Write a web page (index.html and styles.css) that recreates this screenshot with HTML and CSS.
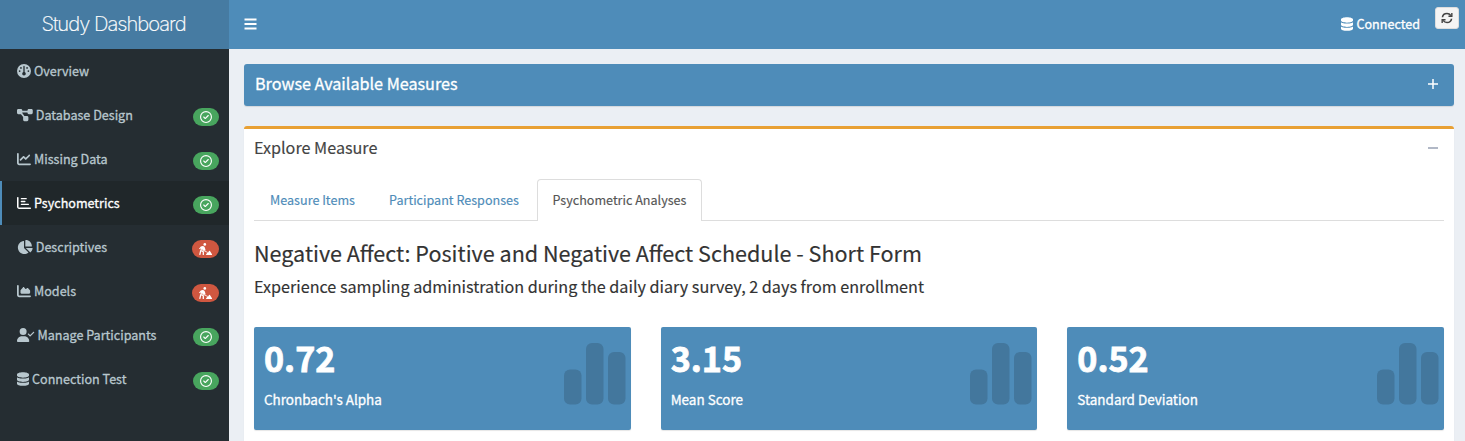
FILE: index.html
```html
<!DOCTYPE html>
<html lang="en">
<head>
<meta charset="utf-8">
<title>Study Dashboard</title>
<link rel="stylesheet" href="styles.css">
</head>
<body>
<svg class="defs" aria-hidden="true">
  <symbol id="check" viewBox="0 0 512 512"><path d="M256 48a208 208 0 1 1 0 416 208 208 0 1 1 0-416zm0 464A256 256 0 1 0 256 0a256 256 0 1 0 0 512zM369 209c9.4-9.4 9.4-24.6 0-33.9s-24.6-9.4-33.9 0l-111 111-47-47c-9.4-9.4-24.6-9.4-33.9 0s-9.4 24.6 0 33.9l64 64c9.4 9.4 24.6 9.4 33.9 0L369 209z"/></symbol>
  <symbol id="digging" viewBox="0 0 13.500 12"><circle cx="5.800" cy="1.400" r="1.350"/><path d="M.6 4.900 1.800 3.500Q3.300 2.700 4.700 3.200 5.400 3.600 5.800 4.600L6.600 7.300 5.900 7.700 2.200 6z"/><path d="M6.800 12 8.200 9.800H9L10 8.100Q10.600 7.500 11.100 8.300L13.400 12z"/><path class="shovel" d="M.4 5.500 8.400 9.300"/><path class="leg" d="M1.700 7.600.9 11.400M2.300 7.700 4.300 8.800V11.400"/></symbol>
  <symbol id="database" viewBox="0 0 448 512"><path d="M448 80v48c0 44.200-100.300 80-224 80S0 172.200 0 128V80C0 35.800 100.300 0 224 0S448 35.800 448 80zM393.200 214.700c20.800-7.400 39.900-16.900 54.800-28.600V288c0 44.200-100.300 80-224 80S0 332.200 0 288V186.100c14.900 11.800 34 21.200 54.800 28.600C99.700 230.700 159.500 240 224 240s124.300-9.300 169.200-25.300zM0 346.100c14.900 11.800 34 21.200 54.800 28.600C99.700 390.700 159.500 400 224 400s124.300-9.300 169.200-25.300c20.800-7.400 39.900-16.900 54.800-28.600V432c0 44.200-100.300 80-224 80S0 476.200 0 432V346.100z"/></symbol>
  <symbol id="bars" viewBox="0 0 62 62"><rect y="26.500" width="17.500" height="35" rx="6"/><rect x="22" width="17.500" height="61.500" rx="6"/><rect x="44" y="9" width="17.500" height="52.500" rx="6"/></symbol>
</svg>
<header class="header">
  <div class="logo">Study Dashboard</div>
  <nav class="navbar">
    <svg class="menu" viewBox="0 0 12 12"><path d="M0 1.500h12M0 6h12M0 10.500h12"/></svg>
    <div class="status"><svg class="db"><use href="#database"/></svg><span>Connected</span></div>
    <button class="refresh"><svg viewBox="0 0 512 512"><path class="arc" d="M62 224C75 125 155 62 256 62c70 0 128 38 168 92M450 288C437 387 357 450 256 450c-70 0-128-38-168-92"/><path class="arc thin" d="M462 40v144H318M50 472V328h144"/></svg></button>
  </nav>
</header>
<div class="shell">
  <aside class="sidebar">
    <a class="item"><svg class="w14" viewBox="0 0 512 512"><path fill-rule="evenodd" d="M0 256a256 256 0 1 1 512 0A256 256 0 1 1 0 256zm320 96c0-26.900-16.500-49.900-40-59.300V88c0-13.300-10.700-24-24-24s-24 10.700-24 24V292.700c-23.500 9.500-40 32.500-40 59.300c0 35.300 28.700 64 64 64s64-28.700 64-64zM144 176a32 32 0 1 0 0-64 32 32 0 1 0 0 64zm-16 80a32 32 0 1 0 -64 0 32 32 0 1 0 64 0zm288 32a32 32 0 1 0 0-64 32 32 0 1 0 0 64zM400 144a32 32 0 1 0 -64 0 32 32 0 1 0 64 0z"/></svg><span>Overview</span></a>
    <a class="item"><svg class="w16" viewBox="0 0 576 512"><path d="M0 80C0 53.500 21.500 32 48 32h96c26.500 0 48 21.500 48 48V96H384V80c0-26.500 21.500-48 48-48h96c26.500 0 48 21.500 48 48v96c0 26.500-21.500 48-48 48H432c-26.500 0-48-21.500-48-48V160H192v16c0 1.700-.1 3.400-.3 5L272 288h96c26.500 0 48 21.500 48 48v96c0 26.500-21.500 48-48 48H272c-26.500 0-48-21.500-48-48V336c0-1.700 .1-3.400 .3-5L144 224H48c-26.500 0-48-21.500-48-48V80z"/></svg><span>Database Design</span><i class="badge ok"><svg><use href="#check"/></svg></i></a>
    <a class="item"><svg class="w14" viewBox="0 0 512 512"><path d="M64 64c0-17.700-14.300-32-32-32S0 46.300 0 64V400c0 44.200 35.800 80 80 80H480c17.700 0 32-14.300 32-32s-14.300-32-32-32H80c-8.800 0-16-7.200-16-16V64zm406.600 86.600c12.500-12.500 12.500-32.800 0-45.300s-32.800-12.500-45.300 0L320 210.700l-57.400-57.400c-12.500-12.500-32.800-12.500-45.300 0l-112 112c-12.500 12.500-12.500 32.800 0 45.300s32.800 12.500 45.300 0L240 221.300l57.400 57.400c12.500 12.500 32.800 12.500 45.300 0l128-128z"/></svg><span>Missing Data</span><i class="badge ok"><svg><use href="#check"/></svg></i></a>
    <a class="item active"><svg class="w14" viewBox="0 0 512 512"><path d="M32 32c14 0 24 10 24 24V408c0 8.800 7.200 16 16 16H488c14 0 24 10 24 24s-10 24-24 24H80c-44.200 0-80-35.800-80-80V56C0 42 14 32 32 32z"/><path d="M160 72H336a24 24 0 0 1 0 48H160a24 24 0 0 1 0-48zm0 104H288a24 24 0 0 1 0 48H160a24 24 0 0 1 0-48zm0 104H416a24 24 0 0 1 0 48H160a24 24 0 0 1 0-48z"/></svg><span>Psychometrics</span><i class="badge ok"><svg><use href="#check"/></svg></i></a>
    <a class="item"><svg class="w16" viewBox="0 0 576 512"><path d="M304 240V16.600c0-9 7-16.600 16-16.600C443.700 0 544 100.300 544 224c0 9-7.600 16-16.600 16H304zM32 272C32 150.700 122.100 50.300 239 34.300c9.200-1.300 17 6.100 17 15.400V288L412.500 444.500c6.700 6.700 6.200 17.700-1.500 23.100C371.800 495.600 323.800 512 272 512C139.500 512 32 404.600 32 272zm526.400 16c9.300 0 16.600 7.800 15.400 17c-7.700 55.900-34.600 105.600-73.900 142.300c-6 5.600-15.400 5.200-21.200-.7L320 288H558.400z"/></svg><span>Descriptives</span><i class="badge wip"><svg><use href="#digging"/></svg></i></a>
    <a class="item"><svg class="w14" viewBox="0 0 512 512"><path d="M64 64c0-17.700-14.300-32-32-32S0 46.300 0 64V400c0 44.200 35.800 80 80 80H480c17.700 0 32-14.300 32-32s-14.300-32-32-32H80c-8.800 0-16-7.200-16-16V64zm96 288H448c17.700 0 32-14.300 32-32V251.800c0-7.600-2.700-15-7.700-20.800l-65.800-76.800c-12.100-14.200-33.700-15-46.900-1.800l-21 21c-10 10-26.400 9.200-35.400-1.600l-39.200-47c-12.600-15.100-35.700-15.400-48.700-.6L135.900 215c-5.100 5.800-7.900 13.300-7.900 21.100v84c0 17.700 14.300 32 32 32z"/></svg><span>Models</span><i class="badge wip"><svg><use href="#digging"/></svg></i></a>
    <a class="item"><svg class="w18" viewBox="0 0 640 512"><path d="M96 128a128 128 0 1 1 256 0A128 128 0 1 1 96 128zM0 482.300C0 383.800 79.800 304 178.300 304h91.400C368.200 304 448 383.800 448 482.300c0 16.400-13.300 29.700-29.700 29.700H29.700C13.300 512 0 498.700 0 482.300zM625 177L497 305c-9.400 9.400-24.600 9.400-33.900 0l-64-64c-9.400-9.400-9.400-24.600 0-33.900s24.600-9.400 33.900 0l47 47L591 143c9.400-9.400 24.600-9.400 33.900 0s9.400 24.600 0 33.900z"/></svg><span>Manage Participants</span><i class="badge ok"><svg><use href="#check"/></svg></i></a>
    <a class="item"><svg class="w12"><use href="#database"/></svg><span>Connection Test</span><i class="badge ok"><svg><use href="#check"/></svg></i></a>
  </aside>
  <main class="content">
    <section class="browse"><h3>Browse Available Measures</h3><svg class="toggle" viewBox="0 0 10 10"><path d="M0 5h10M5 0v10"/></svg></section>
    <section class="explore">
      <div class="explore-head"><h3>Explore Measure</h3><svg class="toggle" viewBox="0 0 10 10"><path d="M0 5h10"/></svg></div>
      <div class="tabs"><a class="tab t1">Measure Items</a><a class="tab t2">Participant Responses</a><a class="tab t3 current">Psychometric Analyses</a></div>
      <h2>Negative Affect: Positive and Negative Affect Schedule - Short Form</h2>
      <h4>Experience sampling administration during the daily diary survey, 2 days from enrollment</h4>
      <div class="cards">
        <div class="card"><div><b>0.72</b><p>Chronbach's Alpha</p></div><svg><use href="#bars"/></svg></div>
        <div class="card"><div><b>3.15</b><p>Mean Score</p></div><svg><use href="#bars"/></svg></div>
        <div class="card"><div><b>0.52</b><p>Standard Deviation</p></div><svg><use href="#bars"/></svg></div>
      </div>
    </section>
  </main>
</div>
</body>
</html>
```
FILE: styles.css
```css
* { box-sizing: border-box; }
body { margin: 0; height: 441px; overflow: hidden; background: #ebeff4; font: 400 12.58px/20px "Noto Sans CJK SC", sans-serif; color: #333; }
h2, h3, h4, p { margin: 0; font-weight: 400; }
svg { display: block; flex: none; fill: currentColor; }
.defs { position: absolute; width: 0; height: 0; }
.header { display: flex; height: 49px; color: #fff; }
.logo { width: 229px; padding-right: 2px; background: #467ba2; text-align: center; font: 200 20.2px/48px Inter, "Liberation Sans", sans-serif; letter-spacing: -1px; -webkit-text-stroke: 0.2px #fff; }
.navbar { flex: 1; display: flex; align-items: flex-start; background: #4e8cb9; padding: 0 6px 0 15px; }
.menu { width: 13px; height: 12px; margin-top: 18px; stroke: #fff; stroke-width: 2; }
.status { display: flex; align-items: center; gap: 3px; height: 48px; margin-left: auto; }
.status, .item, .browse h3, .card p { -webkit-text-stroke: 0.3px currentColor; }
.tabs, .explore-head, h2, h4 { -webkit-text-stroke: 0.15px currentColor; }
.db { width: 12px; height: 14px; }
.refresh { width: 24px; height: 22px; margin: 7px 0 0 15px; padding: 0; border: 1px solid #ddd; border-radius: 3px; background: #f4f4f4; color: #444; display: flex; align-items: center; justify-content: center; }
.refresh svg { width: 12px; height: 12px; }
.arc { fill: none; stroke: currentColor; stroke-width: 68; }
.thin { stroke-width: 60; }
.shell { display: flex; height: 392px; }
.sidebar { width: 229px; background: #252d32; }
.item { display: flex; align-items: center; height: 44px; padding: 0 10px 0 14px; border-left: 3px solid transparent; color: #b8c7ce; }
.item span { margin-left: 3px; }
.item.active { background: #20272a; color: #fff; border-left: 2px solid #4e8cb9; padding-left: 15px; }
.w12, .w14, .w16, .w18 { height: 14px; }
.w12 { width: 12px; } .w14 { width: 14px; } .w16 { width: 15.750px; } .w18 { width: 17.500px; }
.badge { display: flex; align-items: center; justify-content: center; width: 26px; height: 18px; border-radius: 9px; margin: 3px 0 0 auto; color: #fff; }
.badge svg { width: 12px; height: 12px; }
.ok { background: #48a55e; }
.wip { background: #cf5740; width: 27px; }
.badge.wip svg { width: 13.500px; }
.leg, .shovel { fill: none; stroke: currentColor; stroke-width: 1.300; stroke-linecap: round; stroke-linejoin: round; }
.shovel { stroke-width: 0.800; }
.content { flex: 1; padding: 15px 11px 0 15px; }
.browse { display: flex; justify-content: space-between; align-items: center; height: 42px; padding: 0 16px 3px 11px; background: #4e8cb9; color: #fff; border-radius: 3px; box-shadow: 0 1px 1px rgba(0,0,0,.1); }
h3 { font-size: 16.17px; line-height: 20px; }
.browse h3 { margin-bottom: 1px; }
.toggle { width: 10px; height: 10px; stroke: currentColor; stroke-width: 1.500; }
.explore { margin-top: 20px; height: 330px; padding: 0 10px; background: #fff; border-top: 3px solid #e8a033; border-radius: 3px 3px 0 0; box-shadow: 0 1px 1px rgba(0,0,0,.1); }
.explore-head { display: flex; align-items: center; justify-content: space-between; height: 38px; padding-right: 6px; color: #444; }
.explore-head h3 { margin-bottom: 2px; }
.explore-head .toggle { color: #97a0b3; }
.tabs { display: flex; height: 42px; margin-top: 12px; border-bottom: 1px solid #ddd; }
.tab { height: 42px; line-height: 42px; text-align: center; color: #4e8cb9; }
.t1 { width: 117px; } .t2 { width: 166px; } .t3 { width: 165px; }
.current { background: #fff; border: 1px solid #ddd; border-bottom: 0; border-radius: 4px 4px 0 0; color: #555; line-height: 40px; }
h2 { margin-top: 19px; font-size: 21.57px; line-height: 26px; }
h4 { margin-top: 10px; font-size: 16.17px; line-height: 20px; }
.cards { display: grid; grid-template-columns: repeat(3, 1fr); gap: 30px; margin-top: 31px; }
.card { display: flex; justify-content: space-between; height: 103px; padding: 9px 5px 0 10px; background: #4e8cb9; color: #fff; border-radius: 2px; box-shadow: 0 1px 1px rgba(0,0,0,.1); }
.card b { display: block; font-size: 34.1px; line-height: 42px; font-weight: 700; -webkit-text-stroke: 0.8px #fff; }
.card p { font-size: 13.47px; margin-top: 11px; }
.card svg { width: 62px; height: 62px; margin-top: 7px; color: #43779d; }
```
